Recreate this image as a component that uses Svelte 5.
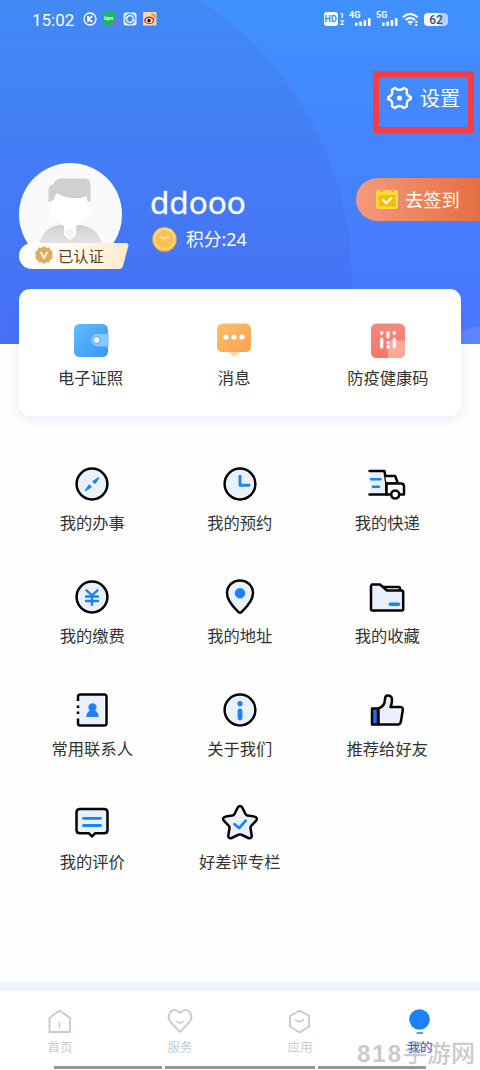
<script lang="ts">
  type Entry = { icon: string; label: string };

  const shortcuts: Entry[] = [
    { icon: 'wallet', label: '电子证照' },
    { icon: 'message', label: '消息' },
    { icon: 'health', label: '防疫健康码' },
  ];

  const services: Entry[] = [
    { icon: 'compass', label: '我的办事' },
    { icon: 'clock', label: '我的预约' },
    { icon: 'truck', label: '我的快递' },
    { icon: 'yuan', label: '我的缴费' },
    { icon: 'pin', label: '我的地址' },
    { icon: 'folder', label: '我的收藏' },
    { icon: 'contacts', label: '常用联系人' },
    { icon: 'info', label: '关于我们' },
    { icon: 'thumb', label: '推荐给好友' },
    { icon: 'comment', label: '我的评价' },
    { icon: 'star', label: '好差评专栏' },
  ];

  const tabs: Entry[] = [
    { icon: 'home', label: '首页' },
    { icon: 'heart', label: '服务' },
    { icon: 'apps', label: '应用' },
    { icon: 'mine', label: '我的' },
  ];

  let activeTab = $state('mine');
</script>

{#snippet signal(label: string)}
  <span class="signal">
    <small>{label}</small>
    <svg width="16" height="8" viewBox="0 0 16 8" fill="#fff">
      <rect x="0" y="4.5" width="2.6" height="3.5" rx=".8" />
      <rect x="4.3" y="3.5" width="2.6" height="4.5" rx=".8" />
      <rect x="8.6" y="2" width="2.6" height="6" rx=".8" />
      <rect x="12.9" y="0" width="2.6" height="8" rx=".8" />
    </svg>
  </span>
{/snippet}

<main class="page">
  <header class="hero">
    <svg class="hero-bg" width="480" height="344" viewBox="0 0 480 344" aria-hidden="true">
      <defs>
        <linearGradient id="disc" x1="0" y1="0" x2="0" y2="344" gradientUnits="userSpaceOnUse">
          <stop offset="0" stop-color="#4289f6" />
          <stop offset="1" stop-color="#466ff5" />
        </linearGradient>
      </defs>
      <circle cx="14" cy="282" r="338" fill="url(#disc)" />
      <ellipse cx="490" cy="375" rx="70" ry="49" fill="#fff" opacity="0.1" />
    </svg>

    <div class="status">
      <span class="time">15:02</span>
      <span class="notices">
        <svg width="14" height="14" viewBox="0 0 14 14" fill="none" stroke="#fff" stroke-width="1.3">
          <circle cx="7" cy="7" r="6" />
          <path d="M5 4v6M9.3 4 5.6 7l3.7 3" stroke-width="1.7" />
        </svg>
        <svg width="14" height="14" viewBox="0 0 14 14">
          <rect width="13" height="13" rx="1.5" fill="#18b964" />
          <path d="M8.5 14l2-4 3.5-1v4z" fill="#9860dc" />
          <text x="1" y="8" font-size="5.5" font-weight="700" fill="#e3fff0">iqm</text>
        </svg>
        <svg width="14" height="14" viewBox="0 0 14 14">
          <rect x=".5" y=".5" width="13" height="13" rx="2.5" fill="#e6f2ff" />
          <circle cx="7" cy="7" r="5.4" fill="#4289f6" />
          <circle cx="7" cy="7" r="3.4" fill="none" stroke="#e6f2ff" stroke-width="1.5" />
          <path d="M2 6.5 7 3.2M12 7.5 7 10.8" stroke="#e6f2ff" stroke-width="1.3" />
        </svg>
        <svg width="14" height="14" viewBox="0 0 14 14">
          <rect width="13.5" height="13.5" rx="1" fill="#fbd9a0" />
          <ellipse cx="6.2" cy="8.3" rx="5" ry="3.8" fill="#d8262a" />
          <ellipse cx="6.2" cy="8.6" rx="3.5" ry="2.5" fill="#fff" />
          <circle cx="6" cy="8.6" r="1.8" fill="#151515" />
          <path d="M8.5 2.5q4-.5 3.2 4" fill="none" stroke="#ef7a1a" stroke-width="1.3" />
        </svg>
      </span>
      <span class="system">
        <span class="hd"><b>HD</b><i>1<br />2</i></span>
        {@render signal('4G')}
        {@render signal('5G')}
        <svg class="wifi" width="17" height="14" viewBox="0 0 17 14" fill="none" stroke="#fff" stroke-width="2">
          <path d="M1 5.2q7-6.3 14.6 0M3.5 8q4.8-4 9.6 0M6 10.5q2.3-1.6 4.6 0" />
          <path d="M8.3 13.2 6.8 11.5h3z" fill="#fff" stroke="none" />
          <path d="M14.3 9v5" stroke-dasharray="2 1" />
        </svg>
        <span class="battery">62</span>
      </span>
    </div>

    <button class="settings">
      <svg width="26" height="26" viewBox="0 0 26 26" fill="none" stroke="#fff" stroke-width="2.4" stroke-linejoin="round">
        <path d="M8 3Q12.5 7 17 3l3 1.700Q18.500 10.400 23.800 12v2Q18.500 15.600 20 21.300L17 23Q12.500 19 8 23l-3-1.700Q6.500 15.600 1.200 14v-2Q6.500 10.400 5 4.700z" />
        <circle cx="12.5" cy="13" r="2.6" fill="#fff" stroke="none" />
      </svg>
      设置
    </button>

    <div class="profile">
      <div class="avatar">
        <svg width="103" height="103" viewBox="0 0 103 103">
          <defs>
            <clipPath id="face"><circle cx="51.5" cy="51.5" r="51.5" /></clipPath>
            <linearGradient id="coat" x1="0" y1="0" x2="0" y2="1">
              <stop offset="0" stop-color="#cfcfd1" />
              <stop offset="1" stop-color="#e5e5e8" />
            </linearGradient>
          </defs>
          <g clip-path="url(#face)">
            <rect width="103" height="103" fill="#f9fafc" />
            <path d="M20 82q3-15 16-19 15-5 30 0 14 4 17 19z" fill="url(#coat)" />
            <path d="M45 60h12v12l-6 5-6-5z" fill="#fff" />
            <path d="M48 66h6l1 5-4 5-4-5z" fill="#f4f4f6" />
            <path d="M34 32h34v11q5 1 3 6-1 4-4 4-5 11-16 11T35 53q-4 0-5-5 0-5 4-5z" fill="#fff" />
            <path d="M29.5 39V26q0-4 5-5 2-5.500 8-5.500h23q6 0 6 6V39l-3-1-1-5q-5 3-15 2-9-1-15-5l-3 7z" fill="#d0d0d2" />
          </g>
        </svg>
        <span class="verified">
          <svg width="18" height="18" viewBox="0 0 18 18">
            <path d="M9 0l2.400 1.700 2.900-.3 1.200 2.700 2.300 1.800L17.200 9l.6 3-2.400 1.800-1.200 2.700-2.900-.3L9 18l-2.400-1.700-2.900.3-1.200-2.700L.2 12.100.8 9l-.6-3 2.400-1.800 1.200-2.700 2.900.3z" fill="#d9ad62" />
            <path d="M5.700 6 9 12l3.300-6" fill="none" stroke="#fff2d3" stroke-width="2" />
          </svg>
          已认证
        </span>
      </div>
      <div class="who">
        <h1>ddooo</h1>
        <p class="points">
          <svg width="25" height="25" viewBox="0 0 25 25">
            <circle cx="12.5" cy="12.5" r="12.3" fill="#f5aa31" />
            <circle cx="12.5" cy="11.9" r="11.3" fill="#ffd47b" />
            <circle cx="12.5" cy="12.3" r="9" fill="#fac052" />
            <path d="M6 11q1-4 5-3l1.500 2L14 8q4-1 5 3-3 3-5 1l-1.500 5-1.500-5q-3 2-5-1z" fill="#ffd987" stroke="#f3ad3a" stroke-width=".6" />
          </svg>
          积分:24
        </p>
      </div>
      <button class="checkin">
        <svg width="24" height="24" viewBox="0 0 24 24">
          <rect x="1" y="3" width="22" height="19" rx="2.5" fill="#ffd93d" />
          <path d="M3.500 8h17v11.500h-17z" fill="#f3bd0d" />
          <path d="M6.500 1v3M17.500 1v3" stroke="#f09b65" stroke-width="2.6" stroke-linecap="round" />
          <path d="M8 13l3.300 3.300 5-5.300" fill="none" stroke="#fff" stroke-width="2.2" stroke-linecap="round" stroke-linejoin="round" />
        </svg>
        去签到
      </button>
    </div>
  </header>

  <section class="shortcuts">
    {#each shortcuts as item (item.icon)}
      <a href="#{item.icon}" class="shortcut {item.icon}">
        <svg width="36" height="36" viewBox="0 0 36 36">
          {#if item.icon === 'wallet'}
            <defs>
              <linearGradient id="blue" x1="0" y1="0" x2="1" y2="1">
                <stop offset="0" stop-color="#62bdfb" />
                <stop offset="1" stop-color="#3b94f8" />
              </linearGradient>
            </defs>
            <rect x="1" y="1" width="34" height="33" rx="5.5" fill="url(#blue)" />
            <path d="M36 11H24.500a6.200 6.200 0 0 0 0 12.400H36z" fill="#91cffd" opacity=".85" />
            <circle cx="23.5" cy="17" r="4" fill="#69b9fb" />
            <circle cx="23.5" cy="17" r="2.7" fill="#fff" />
          {:else if item.icon === 'message'}
            <defs>
              <linearGradient id="orange" x1="0" y1="0" x2="1" y2="1">
                <stop offset="0" stop-color="#fcc068" />
                <stop offset="1" stop-color="#f8a150" />
              </linearGradient>
            </defs>
            <path d="M11 28h14l-7 6z" fill="#fdd9a9" />
            <rect x="1" y="0.5" width="34" height="28.5" rx="5.5" fill="url(#orange)" />
            <g fill="#fff">
              <circle cx="10" cy="14" r="2.6" />
              <circle cx="18" cy="14" r="2.6" />
              <circle cx="26" cy="14" r="2.6" />
            </g>
          {:else}
            <defs>
              <linearGradient id="red" x1="0" y1="0" x2="0" y2="1">
                <stop offset="0" stop-color="#f28a7c" />
                <stop offset="1" stop-color="#fc7469" />
              </linearGradient>
            </defs>
            <rect x="1" y="0.5" width="34" height="34.5" rx="5.5" fill="url(#red)" />
            <path d="M18 17.500h17v12a5.500 5.500 0 0 1-5.500 5.500H18z" fill="#ffb3a8" opacity=".8" />
            <path d="M11.700 9.500v.8M11.700 16v8M18 9.500v4.500M18 19.500v.3M18 23.500v.8M24.300 9.500v.8M24.300 16v8" stroke="#fff" stroke-width="3.2" stroke-linecap="round" />
          {/if}
        </svg>
        <span>{item.label}</span>
      </a>
    {/each}
  </section>

  <section class="services">
    {#each services as item (item.icon)}
      <a href="#{item.icon}" class="service">
        <svg width="38" height="38" viewBox="0 0 38 38" fill="#e8f1fd" stroke="#050505" stroke-width="2.5" stroke-linecap="round" stroke-linejoin="round">
          {#if item.icon === 'compass'}
            <circle cx="19" cy="19" r="15.4" />
            <path d="M25.800 12.800l-5.900 3.700 2 1.900zM12.500 25.500l3.600-5.500 2 1.900z" fill="#1b82f8" stroke="#1b82f8" stroke-width="1.2" />
          {:else if item.icon === 'clock'}
            <circle cx="19" cy="19" r="15.4" />
            <path d="M19 11.300v8.900h9" fill="none" stroke="#1b82f8" stroke-width="2.9" />
          {:else if item.icon === 'truck'}
            <path d="M2 6h14.500L18.500 19v10.500H2z" stroke="none" />
            <path d="M1.500 6h15l2 13v10.500h-17" fill="none" />
            <path d="M17.200 11h10l2.700 7.500H18.500" fill="#fff" />
            <path d="M18.500 18.500H33q3 0 3 3v8H18.500z" fill="#fff" />
            <circle cx="27.2" cy="29.5" r="4" fill="#fff" />
            <path d="M3 14.200h9.500M5 21.800h6" stroke="#1b82f8" stroke-width="2.6" />
          {:else if item.icon === 'yuan'}
            <circle cx="19" cy="19" r="15.4" />
            <path d="M13.500 12.300l5.500 5 5.500-5M13 18.500h12M13 23h12M19 17.500v9.300" fill="none" stroke="#1b82f8" stroke-width="2.4" />
          {:else if item.icon === 'pin'}
            <path d="M19 2.400c-7.500 0-13 5.800-13 12.600 0 6.500 6.500 14.300 11.300 18.800q1.700 1.600 3.400 0C25.500 29.300 32 21.500 32 15 32 8.200 26.500 2.400 19 2.400z" />
            <circle cx="19" cy="15.3" r="5.2" fill="#1b82f8" stroke="none" />
          {:else if item.icon === 'folder'}
            <path d="M15 9h15.500q1.500 0 1.500 1.500V14H18z" fill="#fff" />
            <path d="M3.800 6.500H12l7 6h14.500q1.700 0 1.700 1.700V31q0 1.400-1.400 1.400H4.500q-1.500 0-1.500-1.400V8z" />
            <path d="M22.300 26.300h8.200" stroke="#1b82f8" stroke-width="3.4" />
          {:else if item.icon === 'contacts'}
            <path d="M5 3.500h26v31H5z" stroke="none" />
            <path d="M5 10V5.800Q5 3.500 7.300 3.500h24Q33.500 3.500 33.500 5.800v26.400q0 2.300-2.200 2.300h-24Q5 34.500 5 32.200V27.500" fill="none" stroke-linecap="butt" />
            <path d="M5 14.500V17M5 20.500V23" fill="none" stroke-linecap="butt" />
            <path d="M19.500 12.300a4 4 0 0 0-2.700 7.100q-3.500 2.300-3.500 6.600h12.400q0-4.300-3.500-6.600a4 4 0 0 0-2.700-7.100z" fill="#1b82f8" stroke="none" />
          {:else if item.icon === 'info'}
            <circle cx="19" cy="19" r="15.4" />
            <circle cx="19" cy="12.7" r="2.6" fill="#1b82f8" stroke="none" />
            <path d="M19 20v7" stroke="#1b82f8" stroke-width="4.8" />
          {:else if item.icon === 'thumb'}
            <path d="M4 17.500h6v16H4z" fill="#1b72e8" />
            <path d="M10.500 17.500q6.500-2.300 6.500-9.500 0-3.500 2.800-3.500 4.200 0 4.200 4.500 0 4-1.500 7h9.500q3.200 0 2.800 3l-1.900 11.500q-.5 3-3.200 3H10.500z" />
          {:else if item.icon === 'comment'}
            <path d="M7 5h24q3.500 0 3.500 3.500V26q0 3.300-3.500 3.300h-9L19 32.500l-3-3.200H7Q3.500 29.300 3.500 26V8.500Q3.500 5 7 5z" />
            <path d="M10.500 14.300h17M10.500 21.500h17" stroke="#1b82f8" stroke-width="2.8" />
          {:else}
            <path d="M16.700 3.600q2.300-3 4.600 0l3.400 6.600q.6 1.200 2 1.400l6.600 1q3.800.8 1.900 4l-5 5.300q-1 1-.7 2.400l1.200 7q.2 3.700-3.400 2.700l-6.900-3.300q-1.400-.6-2.800 0L10.700 34q-3.600 1-3.400-2.700l1.200-7q.3-1.400-.7-2.400l-5-5.300q-1.900-3.200 1.900-4l6.600-1q1.400-.2 2-1.400z" />
            <path d="M13.500 20.200l4.600 3.800 6.700-7.300" fill="none" stroke="#1b82f8" stroke-width="2.7" />
          {/if}
        </svg>
        <span>{item.label}</span>
      </a>
    {/each}
  </section>

  <nav class="tabbar">
    {#each tabs as tab (tab.icon)}
      <button class="tab" class:active={tab.icon === activeTab} onclick={() => (activeTab = tab.icon)}>
        <svg width="28" height="28" viewBox="0 0 28 28" fill="none" stroke="#c5cbd9" stroke-width="1.9" stroke-linejoin="round">
          {#if tab.icon === 'home'}
            <path d="M13.500 3.500 24 11v14H3.500V11z" />
            <path d="M13.500 15v6.500" stroke-width="1.4" />
          {:else if tab.icon === 'heart'}
            <path d="M14 6Q8-.3 3.800 6q-3 5 1.500 9.800l8.700 9 8.700-9Q27.200 11 24.200 6 20-.3 14 6z" />
            <path d="M10 14q4 4 7.500 0" stroke-width="1.5" />
          {:else if tab.icon === 'apps'}
            <path d="M13.500 3.500 23 9v10.500L13.500 25.500 4 19.500V9z" />
            <path d="M9 12.500l4.500 2.500 4.500-2.500" stroke-width="1.5" />
          {:else}
            <circle cx="13.5" cy="12.5" r="10.3" fill="#1a82fb" stroke="none" />
            <path d="M10.500 26h6.500" stroke="#1a82fb" stroke-width="1.5" />
          {/if}
        </svg>
        <span>{tab.label}</span>
      </button>
    {/each}
    <div class="gesture"><i></i><i></i><i></i></div>
    <div class="watermark"><b>818</b>手游网</div>
  </nav>
</main>

<style>
  :global(body) {
    margin: 0;
    background: #fff;
  }

  .page {
    width: 480px;
    height: 1070px;
    display: flex;
    flex-direction: column;
    overflow: hidden;
    background: #fefefe;
    color: #333;
    font-family: 'Noto Sans', 'Noto Sans CJK SC', sans-serif;
  }

  svg {
    display: block;
    flex: none;
  }

  a {
    color: inherit;
    text-decoration: none;
  }

  button {
    border: 0;
    padding: 0;
    background: none;
    font: inherit;
    color: inherit;
    cursor: pointer;
  }

  .hero {
    position: relative;
    flex: none;
    height: 344px;
    color: #fff;
    background: linear-gradient(#4091ff, #4a75fe);
  }

  .hero-bg {
    position: absolute;
    inset: 0;
  }

  .status,
  .settings,
  .profile {
    position: relative;
  }

  .status {
    display: flex;
    align-items: center;
    height: 38px;
    padding: 0 32px;
    font-family: Roboto, sans-serif;
  }

  .time {
    width: 51px;
    padding-top: 2px;
    font-size: 17px;
  }

  .notices {
    display: flex;
    gap: 6px;
  }

  .system {
    display: flex;
    align-items: center;
    margin-left: auto;
    gap: 5px;
  }

  .hd {
    display: flex;
    align-items: center;
    gap: 2px;
  }

  .hd b {
    width: 14px;
    border-radius: 3px;
    background: #fff;
    color: #3f86f2;
    font-size: 9px;
    line-height: 14px;
    text-align: center;
  }

  .hd i {
    font-size: 7.5px;
    line-height: 7px;
    font-style: normal;
    font-weight: 700;
  }

  .signal {
    width: 22px;
    height: 14px;
    display: flex;
    flex-direction: column;
    justify-content: space-between;
  }

  .signal small {
    height: 5px;
    font-size: 9px;
    line-height: 6px;
    font-weight: 700;
  }

  .signal svg {
    align-self: flex-end;
  }

  .wifi {
    margin-left: -1px;
  }

  .battery {
    width: 24px;
    height: 13px;
    border-radius: 4px;
    background: linear-gradient(90deg, #fff 62%, #b5d2fd 62%);
    color: #35507c;
    font-size: 12px;
    line-height: 14px;
    font-weight: 500;
    text-align: center;
  }

  .settings {
    display: flex;
    align-items: center;
    gap: 7px;
    width: 101px;
    height: 62px;
    margin: 33px 0 0 373px;
    padding: 0 0 9px 8px;
    box-sizing: border-box;
    border: 6px solid #f83c40;
    font-size: 20px;
    white-space: nowrap;
  }

  .profile {
    display: flex;
    margin-top: 30px;
    padding-left: 19px;
  }

  .avatar {
    width: 103px;
    height: 103px;
    position: relative;
  }

  .verified {
    position: absolute;
    left: 0;
    top: 80px;
    width: 110px;
    height: 26px;
    box-sizing: border-box;
    padding: 0 0 2px 16px;
    display: flex;
    align-items: center;
    gap: 5px;
    border-radius: 13px 0 0 13px;
    background: linear-gradient(90deg, #fff, #fff9ef 55%, #ffe9ca);
    clip-path: path('M0 0H107Q110 0 109.3 3L104 23Q103 26 100 26H0z');
    color: #5a4410;
    font-size: 15.3px;
    white-space: nowrap;
  }

  .who {
    margin-left: 28px;
    padding-top: 20px;
  }

  h1 {
    margin: 0;
    font-size: 31.5px;
    line-height: 38px;
    font-weight: 400;
    -webkit-text-stroke: 0.3px #fff;
  }

  .points {
    display: flex;
    align-items: center;
    gap: 9px;
    margin: 6px 0 0 2px;
    font-size: 17.8px;
    line-height: 25px;
  }

  .checkin {
    display: flex;
    align-items: center;
    gap: 6px;
    width: 124px;
    height: 43px;
    margin: 15px 0 0 auto;
    padding: 0 0 2px 19px;
    box-sizing: border-box;
    border-radius: 22px 0 0 22px;
    background: linear-gradient(90deg, #f49a7a, #e56f43);
    font-size: 18.3px;
    white-space: nowrap;
  }

  .shortcuts {
    position: relative;
    flex: none;
    display: flex;
    gap: 94px;
    width: 442px;
    height: 127px;
    margin: -55px 0 0 19px;
    padding: 34px 0 0 39px;
    box-sizing: border-box;
    border-radius: 11px;
    background: #fff;
    box-shadow: 0 3px 12px rgba(85, 115, 240, 0.13);
  }

  .shortcut,
  .service {
    display: flex;
    flex-direction: column;
    align-items: center;
    font-size: 16.3px;
    line-height: 24px;
    white-space: nowrap;
  }

  .shortcut span {
    margin-top: 7px;
  }

  /* the icon is wider than the two-character label */
  .message {
    margin: 0 -1px;
  }

  .health {
    margin-left: 2px;
  }

  .services {
    display: grid;
    grid-template-columns: repeat(3, 147.5px);
    grid-auto-rows: 113px;
    margin: 49px 0 0 18.5px;
  }

  .service span {
    margin-top: 7.5px;
  }

  .tabbar {
    position: relative;
    flex: none;
    display: grid;
    grid-template-columns: repeat(4, 1fr);
    height: 79px;
    margin-top: auto;
    background: #fff;
    box-shadow: 0 -9px 3px #eff3fc;
  }

  .tab {
    display: flex;
    flex-direction: column;
    align-items: center;
    padding-top: 16px;
    font-size: 12.5px;
    line-height: 18px;
    color: #c5cbd9;
  }

  .tab span {
    margin-top: 4px;
  }

  .tab.active {
    color: #1d5cc0;
  }

  .gesture {
    position: absolute;
    left: 54px;
    bottom: 1px;
    display: flex;
    gap: 3px;
  }

  .gesture i {
    width: 108px;
    height: 3px;
    background: #979797;
  }

  .gesture i:nth-child(2) {
    width: 150px;
  }

  .watermark {
    position: absolute;
    left: 357px;
    top: 44px;
    font-size: 24px;
    line-height: 36px;
    font-weight: 500;
    color: rgba(125, 125, 125, 0.42);
    white-space: nowrap;
    pointer-events: none;
  }

  .watermark b {
    font-family: 'Liberation Sans', sans-serif;
    letter-spacing: 2px;
  }
</style>
